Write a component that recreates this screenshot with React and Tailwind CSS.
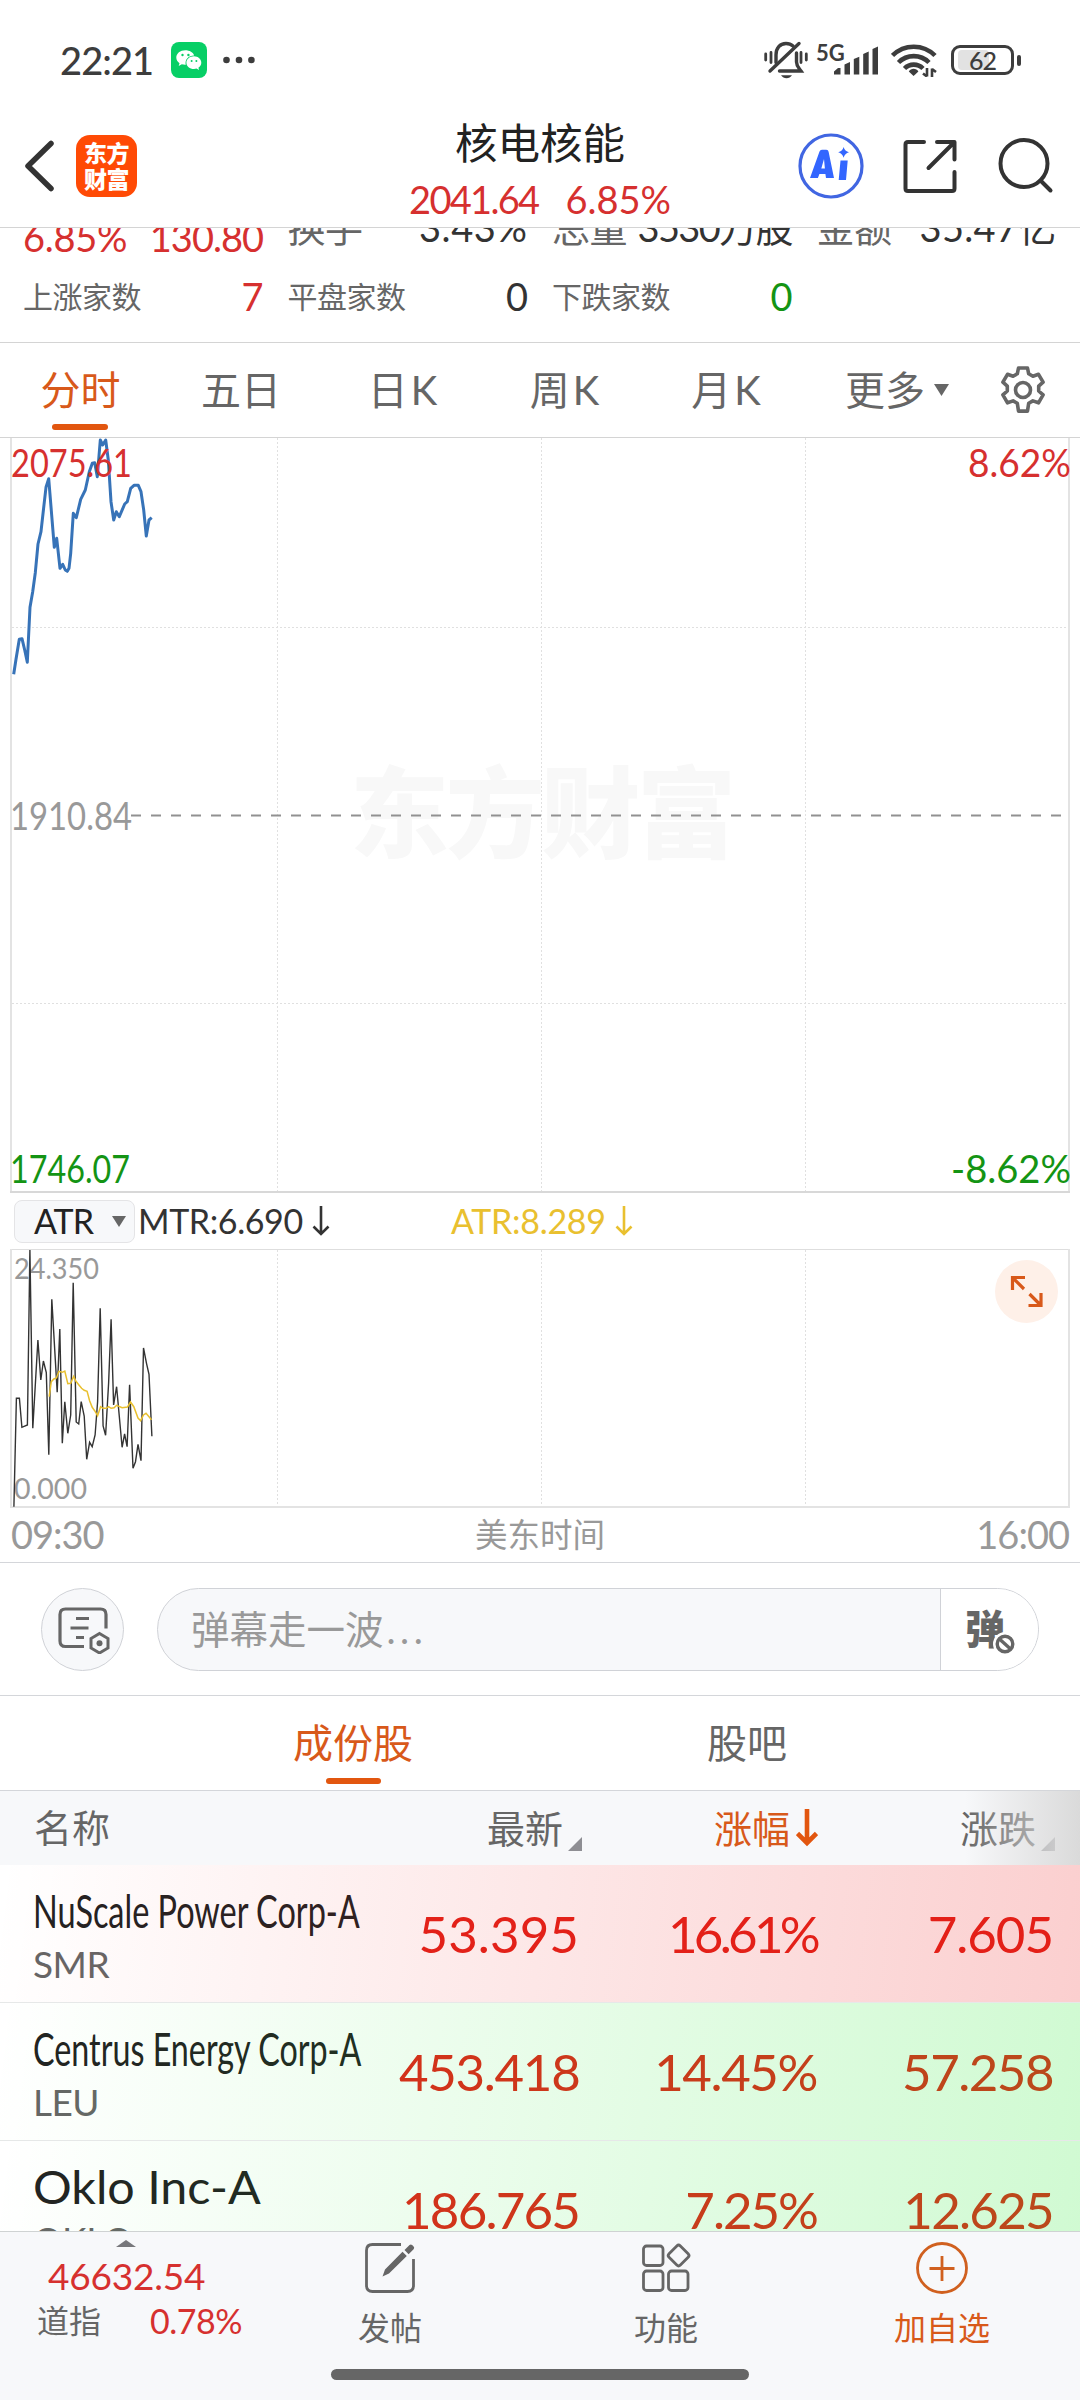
import React from 'react';

const PRICE_POINTS =
  '13.7,237.3 16,222.3 19.3,202.3 22,201.7 24.7,213 27.3,225.3 30,170.3 32.7,154.7 35.3,135.7 38,107 41,94.7 43.3,74 46,50.3 48.7,41.7 51.7,78.3 54.3,110.3 56.7,101.3 60,131.3 62.7,127.3 65.3,133 67.3,134.3 69,131.3 70.7,116.3 73.3,76.3 76.3,80.7 80.7,62.3 85.3,53 89.3,34.7 92.3,26.3 94.7,25.7 97.3,39.7 100.3,3 102.7,8 105.7,3 108.3,23 111,64.7 113.7,83 116.3,74.7 119.3,79.7 124.7,67 127.3,64.7 130.7,51.3 134,48.3 138.3,48.3 141,54.7 143.7,73 146.3,99 149,83 151.7,80.7';

const MTR_POINTS =
  '13.9,257.7 16.4,149.3 19.4,149.3 21.9,178.3 27.4,176 29.9,1 32.8,179.3 37.9,91 40.8,131 43.4,112 46.3,123.7 48.8,205.7 51.8,50.3 57.2,143.3 59.8,80 62.3,194.3 64.8,152.7 67.8,184.3 70.7,166 73.2,33.7 76.2,173 78.7,175 81.2,152.7 84.2,167 86.7,210.3 89.6,193.3 92.2,197.7 95.1,186 97.6,152.7 100.2,59.3 103.1,177 105.6,186.3 108.6,134.3 111.1,70.3 113.6,156 116.6,137.7 122.1,198.3 124.6,185 127.1,197.7 129.6,135.7 133,219.3 135.5,212.7 138,195.3 141,211.7 143.5,99 146.5,114.3 149,125.3 151.9,187.3';

const ATR_POINTS =
  '49.2,147.7 51.3,132.7 53.9,130 56.4,129 58.9,122.3 62.3,123.3 64.8,122 67.8,134.7 70.7,134.3 73.7,127.3 75.8,132 78.7,135.7 81.6,139.3 84.2,141.3 87.1,142.3 89.6,151.7 92.2,158.3 95.1,162.3 97.6,166.7 100.6,157.7 103.1,159.3 106.1,159.3 108.6,157.7 111.1,159.3 114.1,158.7 116.6,156.3 122.1,158.7 127.5,158 130.5,153 133.8,157.7 138,169 140.6,171.7 143.5,166 146,164.3 149,167.7 151.5,170.7';

const stocks = [
  {
    name: 'NuScale Power Corp-A',
    code: 'SMR',
    price: '53.395',
    pct: '16.61%',
    diff: '7.605',
    nameClass: 'scale-x-[0.69]',
    priceClass: 'tracking-[0.1px]',
    pctClass: 'tracking-[-3.7px]',
    diffClass: 'tracking-[-1px]',
    tint: 'to-[#eb0f0f]/20',
  },
  {
    name: 'Centrus Energy Corp-A',
    code: 'LEU',
    price: '453.418',
    pct: '14.45%',
    diff: '57.258',
    nameClass: 'scale-x-[0.687]',
    priceClass: 'tracking-[-1.300px]',
    pctClass: 'tracking-[-1.400px]',
    diffClass: 'tracking-[-1.500px]',
    tint: 'to-[#14e61e]/20',
  },
  {
    name: 'Oklo Inc-A',
    code: 'OKLO',
    price: '186.765',
    pct: '7.25%',
    diff: '12.625',
    nameClass: 'scale-x-[1.03]',
    priceClass: 'tracking-[-1.800px]',
    pctClass: 'tracking-[-2px]',
    diffClass: 'tracking-[-1.700px]',
    tint: 'to-[#14e61e]/20',
  },
];

function StatusBar() {
  return (
    <div className="flex h-[120px] shrink-0 items-center pl-[60px] pr-[59px] text-[#3d3d3d]">
      <span className="w-[111px] text-[38px] font-medium leading-none tracking-[-0.900px]">22:21</span>
      <svg width="36" height="36" viewBox="0 0 36 36">
        <rect width="36" height="36" rx="8" fill="#07cf66" />
        <path d="M14.3 8.3c-5 0-9 3.200-9 7.300 0 2.300 1.200 4.200 3.200 5.600l-.8 2.700 3.100-1.600c1 .3 2.100.5 3.200.5h.8c-1.300-5.200 3-9.400 8.300-9.300-.9-3.100-4.500-5.200-8.800-5.200z" fill="#fff" />
        <path d="M23 14.300c-4.300 0-7.600 2.900-7.600 6.400s3.300 6.300 7.600 6.300c.9 0 1.700-.1 2.500-.4l2.600 1.400-.7-2.300c1.800-1.200 2.900-2.900 2.900-5 0-3.500-3.200-6.400-7.300-6.400z" fill="#fff" />
        <g fill="#07cf66">
          <circle cx="11.500" cy="13" r="1.200" />
          <circle cx="17.400" cy="13" r="1.200" />
          <circle cx="20.600" cy="19" r="1" />
          <circle cx="25.400" cy="19" r="1" />
        </g>
      </svg>
      <svg className="ml-4" width="32" height="8" viewBox="0 0 32 8" fill="currentColor">
        <circle cx="3.500" cy="4" r="3.300" />
        <circle cx="16" cy="4" r="3.300" />
        <circle cx="28.400" cy="4" r="3.300" />
      </svg>

      <div className="ml-auto flex items-center">
        {/* muted bell */}
        <svg width="44" height="38" viewBox="0 0 44 38" fill="none" stroke="currentColor" strokeWidth="3.400" strokeLinecap="round">
          <path d="M1.700 13v6M7 11.500v10M37 11.500v10M42.300 13v6" strokeWidth="2.800" />
          <path d="M12 21.500V14c0-7 4-11.500 10-11.500 3 0 5.300 1 7 2.600M32.500 12v9c0 4 2 5.500 4.500 9H15.500" />
          <path d="M35 2.500 6 30" />
          <path d="M17 34.200h11c-2.600 4-8.400 4-11 0z" fill="currentColor" stroke="none" />
        </svg>
        <div className="relative ml-[8px] h-[32px] w-[62px]">
          <span className="absolute left-0 top-[-2px] text-[22px] font-bold leading-none">5G</span>
          <svg className="absolute left-[18px] top-0" width="44" height="32" viewBox="0 0 44 32" fill="currentColor">
            <path d="M0 30.500v-3l4-3.500h2.500v6.500zM10.500 30.500V20.500l5.500-2.500v12.500zM19.800 30.500V15l5.500-2.300v17.800zM29.200 30.500V10l5.500-2.500v23zM38.500 30.500V5L44 2.500v28z" />
          </svg>
        </div>
        <svg className="ml-[13px]" width="46" height="34" viewBox="0 0 46 34" fill="none" stroke="currentColor" strokeWidth="4.600">
          <path d="M1.500 12.500a30 30 0 0 1 42.500 0M7.500 19.500a21.500 21.500 0 0 1 30.500 0M13.500 25.500a13 13 0 0 1 18.500 0" />
          <path d="M17.800 28.500c2-3.600 7.600-3.600 9.600 0l-4.800 4.500z" fill="currentColor" stroke="none" />
          <path d="M36 25v8.500M41 34v-8.500M32 30.500l4 3M41 26l4 3" strokeWidth="2.600" />
        </svg>
        <div className="ml-[14px] flex items-center">
          <div className="relative flex h-[30px] w-[63px] items-center justify-center rounded-[9px] border-[3px] border-[#3d3d3d]">
            <span className="absolute left-[4px] top-[2px] h-5 w-[31px] rounded-[4px] bg-[#e2e2e2]" />
            <span className="relative text-[25px] font-medium leading-none tracking-[-1px]">62</span>
          </div>
          <span className="ml-[3px] h-[11px] w-[4px] rounded-[2px] bg-[#3d3d3d]" />
        </div>
      </div>
    </div>
  );
}

function Header() {
  return (
    <div className="grid h-[108px] shrink-0 grid-cols-3 border-b border-[#d4d4d4]">
      <div className="flex items-start pl-[22px] pt-[15px]">
        <svg className="mt-[4px]" width="34" height="54" viewBox="0 0 34 54" fill="none" stroke="#333" strokeWidth="5.500" strokeLinecap="round" strokeLinejoin="round">
          <path d="M29 4.500 6 27l23 22.500" />
        </svg>
        <div className="ml-[20px] flex h-[62px] w-[61px] flex-col items-center justify-center rounded-[14px] bg-[#ff4a05] text-[23px] font-black leading-[26px] tracking-[-0.500px] text-white">
          <span>东方</span>
          <span>财富</span>
        </div>
      </div>
      <div className="flex flex-col items-center">
        <span className="text-[42.500px] leading-[46px] text-[#222]">核电核能</span>
        <span className="mt-[13px] flex gap-[27px] text-[38px] leading-[40px] text-[#d6302f]">
          <span className="tracking-[-1.700px]">2041.64</span>
          <span>6.85%</span>
        </span>
      </div>
      <div className="flex items-start justify-end pr-[26px] pt-[12px]">
        <svg width="68" height="68" viewBox="0 0 68 68">
          <circle cx="34" cy="34" r="31" fill="none" stroke="#4166e2" strokeWidth="3.200" />
          <path d="M13 46 22.500 19.500q.6-1.700 2.400-1.700h4.400q2 0 2.300 2L37 46h-8l-.6-4h-6l-1.500 4zM24.300 36.500h3.600L27 27z" fill="#3366ff" fillRule="evenodd" />
          <path d="M43.500 28.500h7.200L49 48h-7.300zM46.600 15q1.200 4.200 5.400 5.300-4.200 1.200-5.400 5.400-1.200-4.200-5.400-5.400 4.200-1.100 5.400-5.300z" fill="#3366ff" />
        </svg>
        <svg className="ml-[38px] mt-[6px]" width="54" height="56" viewBox="0 0 54 56" fill="none" stroke="#333" strokeWidth="4" strokeLinecap="round" strokeLinejoin="round">
          <path d="M21 4H5q-2.500 0-2.500 2.500v44Q2.500 53 5 53h44q2.500 0 2.500-2.500V34M34 4h17.500v17.500M51 4.500 25.500 30" />
        </svg>
        <svg className="ml-[39px] mt-[5px]" width="58" height="58" viewBox="0 0 58 58" fill="none" stroke="#333" strokeWidth="4" strokeLinecap="round">
          <circle cx="28" cy="26.500" r="23.500" />
          <path d="m44.500 43.500 10 10" />
        </svg>
      </div>
    </div>
  );
}

function Stat({ label, value, color }) {
  return (
    <div className="flex items-center justify-between">
      <span className="text-[30px] text-[#666]">{label}</span>
      <span className={color}>{value}</span>
    </div>
  );
}

function Stats() {
  return (
    <div className="h-[115px] shrink-0 overflow-hidden border-b border-[#d4d4d4]">
      <div className="-mt-[21px] grid grid-cols-[240px_240px_240px_240px] grid-rows-[40px_40px] gap-x-[24.500px] gap-y-[29px] pl-[23px] text-[38px] leading-[40px] tracking-[-0.500px] text-[#333]">
        <div className="mt-[10px] flex justify-between text-[#d6302f]">
          <span className="tracking-[-0.300px]">6.85%</span>
          <span className="tracking-[-1px]">130.80</span>
        </div>
        <div className="flex justify-between">
          <span className="text-[#666]">换手</span>
          <span className="tracking-[0.600px]">3.43%</span>
        </div>
        <div className="flex justify-between">
          <span className="text-[#666]">总量</span>
          <span className="whitespace-nowrap tracking-[-1.600px]">3530万股</span>
        </div>
        <div className="flex justify-between">
          <span className="text-[#666]">金额</span>
          <span className="tracking-[0.300px]">35.47亿</span>
        </div>
        <Stat label="上涨家数" value="7" color="text-[#d6302f]" />
        <Stat label="平盘家数" value="0" color="text-[#333]" />
        <Stat label="下跌家数" value="0" color="text-[#149414]" />
      </div>
    </div>
  );
}

function ChartTabs() {
  return (
    <div className="flex h-[94px] shrink-0 text-[40px] leading-[94px] text-[#666]">
      <div className="relative w-[161px] text-center text-[#d8591a]">
        分时
        <span className="absolute bottom-[7px] left-[52px] h-[6px] w-[56px] rounded-full bg-[#e2560f]" />
      </div>
      <div className="w-[160px] text-center">五日</div>
      <div className="w-[163px] text-center">日<span className="ml-[3px]">K</span></div>
      <div className="w-[161px] text-center">周<span className="ml-[3px]">K</span></div>
      <div className="w-[162px] text-center">月<span className="ml-[3px]">K</span></div>
      <div className="ml-[38px] flex items-center">
        更多
        <svg className="ml-[9px]" width="15" height="12" viewBox="0 0 15 12">
          <path d="M0 0h15L7.500 12z" fill="#666" />
        </svg>
      </div>
      <svg className="ml-[49px] mt-[23px]" width="50" height="50" viewBox="0 0 50 50" fill="none" stroke="#666" strokeWidth="3.600" strokeLinejoin="round">
        <path d="M20.500 2h9l1.200 5.800 4.200 2.400 5.600-1.900 4.600 7.900-4.400 3.900v4.900l4.400 3.900-4.600 7.900-5.600-1.900-4.200 2.400-1.200 7.800h-9l-1.200-7.800-4.200-2.400-5.600 1.900-4.600-7.900 4.400-3.900v-4.900l-4.400-3.900 4.600-7.900 5.600 1.900 4.200-2.400z" />
        <circle cx="25" cy="24" r="7.500" />
      </svg>
    </div>
  );
}

function PriceChart() {
  return (
    <svg className="block shrink-0 text-[38px]" width="1080" height="756" viewBox="0 0 1080 756">
      <text x="350" y="413" textLength="386" className="fill-[#f8f8f8] text-[99px] font-black">东方财富</text>
      <g stroke="#e0e0e0" strokeDasharray="2 2">
        <path d="M277.500 1v754M541.500 1v754M805.500 1v754M12 190.500h1057M12 566.500h1057" />
      </g>
      <path d="M0 .5h1080" stroke="#d4d4d4" />
      <path d="M11 1v755M1069 1v755" stroke="#e3e3e3" strokeWidth="2" />
      <path d="M10 755h1060" stroke="#d8d8d8" strokeWidth="2" />
      <path d="M131 378.500h938" stroke="#919191" strokeWidth="2" strokeDasharray="10 10" />
      <polyline points={PRICE_POINTS} fill="none" stroke="#3773b8" strokeWidth="3" strokeLinejoin="round" />
      <text x="11" y="40" textLength="121" lengthAdjust="spacingAndGlyphs" fill="#d6302f">2075.61</text>
      <text x="968" y="40" textLength="103" lengthAdjust="spacingAndGlyphs" fill="#d6302f">8.62%</text>
      <text x="10" y="393" textLength="122" lengthAdjust="spacingAndGlyphs" fill="#999">1910.84</text>
      <text x="10" y="746" textLength="120" lengthAdjust="spacingAndGlyphs" fill="#149414">1746.07</text>
      <text x="951" y="746" textLength="120" lengthAdjust="spacingAndGlyphs" fill="#149414">-8.62%</text>
    </svg>
  );
}

function DownArrow() {
  return (
    <svg className="ml-[9px]" width="18" height="30" viewBox="0 0 18 30" fill="none" stroke="currentColor" strokeWidth="2.600">
      <path d="M9 0v28M1.500 20.500 9 28l7.500-7.500" />
    </svg>
  );
}

function AtrBar() {
  return (
    <div className="flex h-[56px] shrink-0 items-center pl-[14px] text-[34px] leading-none text-[#333]">
      <div className="flex h-[43px] w-[121px] items-center rounded-[8px] border border-[#e4e4e6] bg-[#f7f8fa] pl-[19px] text-[#222]">
        <span className="w-[58px] tracking-[-1px]">ATR</span>
        <svg className="ml-[20px]" width="14" height="11" viewBox="0 0 14 11">
          <path d="M0 0h14L7 11z" fill="#666" />
        </svg>
      </div>
      <div className="ml-[3px] flex w-[313px] items-center">
        <span className="tracking-[-0.400px]">MTR:6.690</span>
        <DownArrow />
      </div>
      <div className="flex items-center text-[#e9c02f]">
        <span className="tracking-[-0.300px]">ATR:8.289</span>
        <DownArrow />
      </div>
    </div>
  );
}

function AtrChart() {
  return (
    <svg className="block shrink-0" width="1080" height="260" viewBox="0 0 1080 260">
      <g stroke="#e0e0e0" strokeDasharray="2 2">
        <path d="M277.500 1v258M541.500 1v258M805.500 1v258" />
      </g>
      <path d="M10 .5h1060" stroke="#dedede" />
      <path d="M11 0v259M1069 0v259M10 258h1060" stroke="#e3e3e3" strokeWidth="2" />
      <g className="text-[28px]" fill="#999">
        <text x="14" y="30" textLength="85" lengthAdjust="spacingAndGlyphs">24.350</text>
        <text x="14" y="250" textLength="73" lengthAdjust="spacingAndGlyphs">0.000</text>
      </g>
      <polyline points={MTR_POINTS} fill="none" stroke="#333" strokeWidth="1.400" />
      <polyline points={ATR_POINTS} fill="none" stroke="#e9c02f" strokeWidth="1.500" />
      <circle cx="1026.500" cy="42.500" r="31.500" fill="#fef0e8" />
      <path d="M1025 28.500h-12.500V41M1012.500 28.500l11.500 11.500M1028.500 56.500h12.500V44M1041 56.500 1029.500 45" fill="none" stroke="#d8591a" strokeWidth="3.200" />
    </svg>
  );
}

function Danmu() {
  return (
    <div className="flex h-[133px] shrink-0 items-center border-t border-[#d4d6da] pl-[41px] pr-[41px]">
      <div className="flex size-[83px] items-center justify-center rounded-full border border-[#d0d2d7] bg-[#f7f8fa]">
        <svg className="ml-[2px] mt-[2px]" width="54" height="48" viewBox="0 0 54 48" fill="none" stroke="#666" strokeWidth="3.200">
          <path d="M27 40.500H8.500q-5.500 0-5.500-5.500V8.500Q3 3 8.500 3h35Q49 3 49 8.500v14" />
          <path d="M19 12.500h13M13.500 22h18M19 31.500h8" />
          <path d="M42.500 27.500l8.500 5v9.500l-8.500 5-8.500-5v-9.500z" strokeWidth="3" />
          <circle cx="42.500" cy="37.200" r="3" fill="#666" stroke="none" />
        </svg>
      </div>
      <div className="ml-[33px] flex h-[83px] flex-1 overflow-hidden rounded-full border border-[#d0d2d7] bg-[#f7f8fa]">
        <span className="flex-1 pl-[33px] text-[38.500px] leading-[80px] text-[#999]">
          弹幕走一波<span className="ml-[3px] tracking-[4.500px]">...</span>
        </span>
        <div className="w-[98px] border-l border-[#d0d2d7] bg-white">
          <div className="relative ml-[24px] mt-[19px] w-[52px]">
            <span className="block text-[40px] font-black leading-[42px] text-[#666]">弹</span>
            <svg className="absolute left-[28px] top-[24px]" width="24" height="24" viewBox="0 0 24 24">
              <circle cx="12" cy="12" r="12" fill="#fff" />
              <circle cx="12" cy="12" r="7.800" fill="none" stroke="#666" strokeWidth="3.400" />
              <path d="m6.500 7 11 10" stroke="#666" strokeWidth="3.400" />
            </svg>
          </div>
        </div>
      </div>
    </div>
  );
}

function SortMark() {
  return (
    <svg className="ml-[5px] mt-[32px]" width="14" height="14" viewBox="0 0 14 14">
      <path d="M14 0v14H0z" fill="#8e8e93" />
    </svg>
  );
}

function TableHead() {
  return (
    <div className="relative flex h-[75px] shrink-0 border-t border-[#d4d6da] bg-[#f7f8fa] pl-[34px] text-[38px] leading-[73px] text-[#666]">
      <div className="w-[366px]">名称</div>
      <div className="flex w-[182px] items-center justify-end">
        最新
        <SortMark />
      </div>
      <div className="flex w-[236px] items-center justify-end text-[#d8591a]">
        涨幅
        <svg className="ml-[6px]" width="22" height="38" viewBox="0 0 22 38" fill="none" stroke="#e2560f" strokeWidth="4.600">
          <path d="M11 0v34M1.500 24.500 11 34l9.500-9.500" />
        </svg>
      </div>
      <div className="flex w-[237px] items-center justify-end">
        涨跌
        <SortMark />
      </div>
      <div className="absolute inset-y-0 right-0 w-[115px] bg-linear-to-r from-[#f7f8fa]/0 to-[#dadada]" />
    </div>
  );
}

function StockRow({ stock }) {
  return (
    <div className="relative flex h-[138px] shrink-0 border-b border-[#e6e8e8] pl-[33px] text-[51px] leading-[138px] text-[#e2231a]">
      <div className="flex w-[366px] flex-col pt-[21px]">
        <span className={'origin-left whitespace-nowrap text-[47px] leading-[48px] text-[#222] ' + stock.nameClass}>{stock.name}</span>
        <span className="mt-[11px] text-[37px] leading-[38px] tracking-[-0.500px] text-[#666]">{stock.code}</span>
      </div>
      <div className={'w-[180px] text-right ' + stock.priceClass}>{stock.price}</div>
      <div className={'w-[238px] text-right ' + stock.pctClass}>{stock.pct}</div>
      <div className={'w-[236px] text-right ' + stock.diffClass}>{stock.diff}</div>
      <div className={'absolute inset-0 bg-linear-[97deg] from-white/0 ' + stock.tint} />
    </div>
  );
}

function BottomNav() {
  return (
    <div className="relative grid h-[169px] shrink-0 grid-cols-[252px_1fr_1fr_1fr] border-t border-[#cfd3d3] bg-[#f7f8fa] text-[32px] leading-none text-[#666]">
      <div className="pl-[37px] pt-[8px]">
        <svg className="ml-[79px]" width="20" height="7" viewBox="0 0 20 7">
          <path d="M10 0 20 7H0z" fill="#77777b" />
        </svg>
        <div className="ml-[11px] mt-[9px] text-[37px] leading-[40px] tracking-[-0.200px] text-[#d6302f]">46632.54</div>
        <div className="mt-[5px] flex items-center leading-[40px]">
          <span>道指</span>
          <span className="ml-[49px] text-[34px] tracking-[-0.500px] text-[#d6302f]">0.78%</span>
        </div>
      </div>
      <div className="flex flex-col items-center pt-[10px]">
        <svg width="52" height="52" viewBox="0 0 52 52" fill="none" stroke="#666" strokeWidth="2.800">
          <path d="M37 2.500H8.500q-6 0-6 6v35q0 6 6 6h35q6 0 6-6V17" />
          <path d="M18.500 34.500 21 27.500 38.500 9.800l4.300 4.200L25 31.500zM40.500 8l5-5q1.300-1 2.600 0l1.500 1.500q1.200 1.400 0 2.700l-5 5z" fill="#666" stroke="none" />
        </svg>
        <span className="mt-[18px]">发帖</span>
      </div>
      <div className="flex flex-col items-center pt-[10px]">
        <svg width="52" height="52" viewBox="0 0 52 52" fill="none" stroke="#666" strokeWidth="2.800">
          <rect x="3.500" y="4" width="19.500" height="19.500" rx="3" />
          <rect x="3.500" y="29" width="19.500" height="19.500" rx="3" />
          <rect x="28.500" y="29" width="19.500" height="19.500" rx="3" />
          <rect x="30.600" y="5.500" width="16" height="16" rx="2.500" transform="rotate(45 38.600 13.500)" />
        </svg>
        <span className="mt-[18px]">功能</span>
      </div>
      <div className="flex flex-col items-center pt-[10px] text-[#d8591a]">
        <svg width="52" height="52" viewBox="0 0 52 52" fill="none" stroke="#d0601f" strokeWidth="2.800">
          <circle cx="26" cy="26" r="24.500" />
          <path d="M26 14v25M13.500 26.500h25" />
        </svg>
        <span className="mt-[18px]">加自选</span>
      </div>
      <div className="absolute bottom-[20px] left-[331px] h-[11px] w-[418px] rounded-full bg-[#666]" />
    </div>
  );
}

export default function App() {
  return (
    <div className="flex h-[2400px] w-[1080px] flex-col overflow-hidden bg-white font-[Lato,'Noto_Sans_CJK_SC',sans-serif]">
      <StatusBar />
      <Header />
      <Stats />
      <ChartTabs />
      <PriceChart />
      <AtrBar />
      <AtrChart />
      <div className="grid h-[53px] shrink-0 grid-cols-3 px-[11px] text-[38px] leading-[51px] tracking-[-1px] text-[#999]">
        <span>09:30</span>
        <span className="text-center text-[32.500px] tracking-normal">美东时间</span>
        <span className="text-right">16:00</span>
      </div>
      <Danmu />
      <div className="flex h-[95px] shrink-0 border-t border-[#d4d6da] pl-[156px] text-[40px] leading-[94px] text-[#666]">
        <div className="relative w-[394px] text-center text-[#d8591a]">
          成份股
          <span className="absolute bottom-[6px] left-[170px] h-[6px] w-[55px] rounded-full bg-[#e2560f]" />
        </div>
        <div className="w-[394px] text-center">股吧</div>
      </div>
      <TableHead />
      <div className="h-[366px] shrink-0 overflow-hidden">
        {stocks.map((stock) => (
          <StockRow key={stock.code} stock={stock} />
        ))}
      </div>
      <BottomNav />
    </div>
  );
}
